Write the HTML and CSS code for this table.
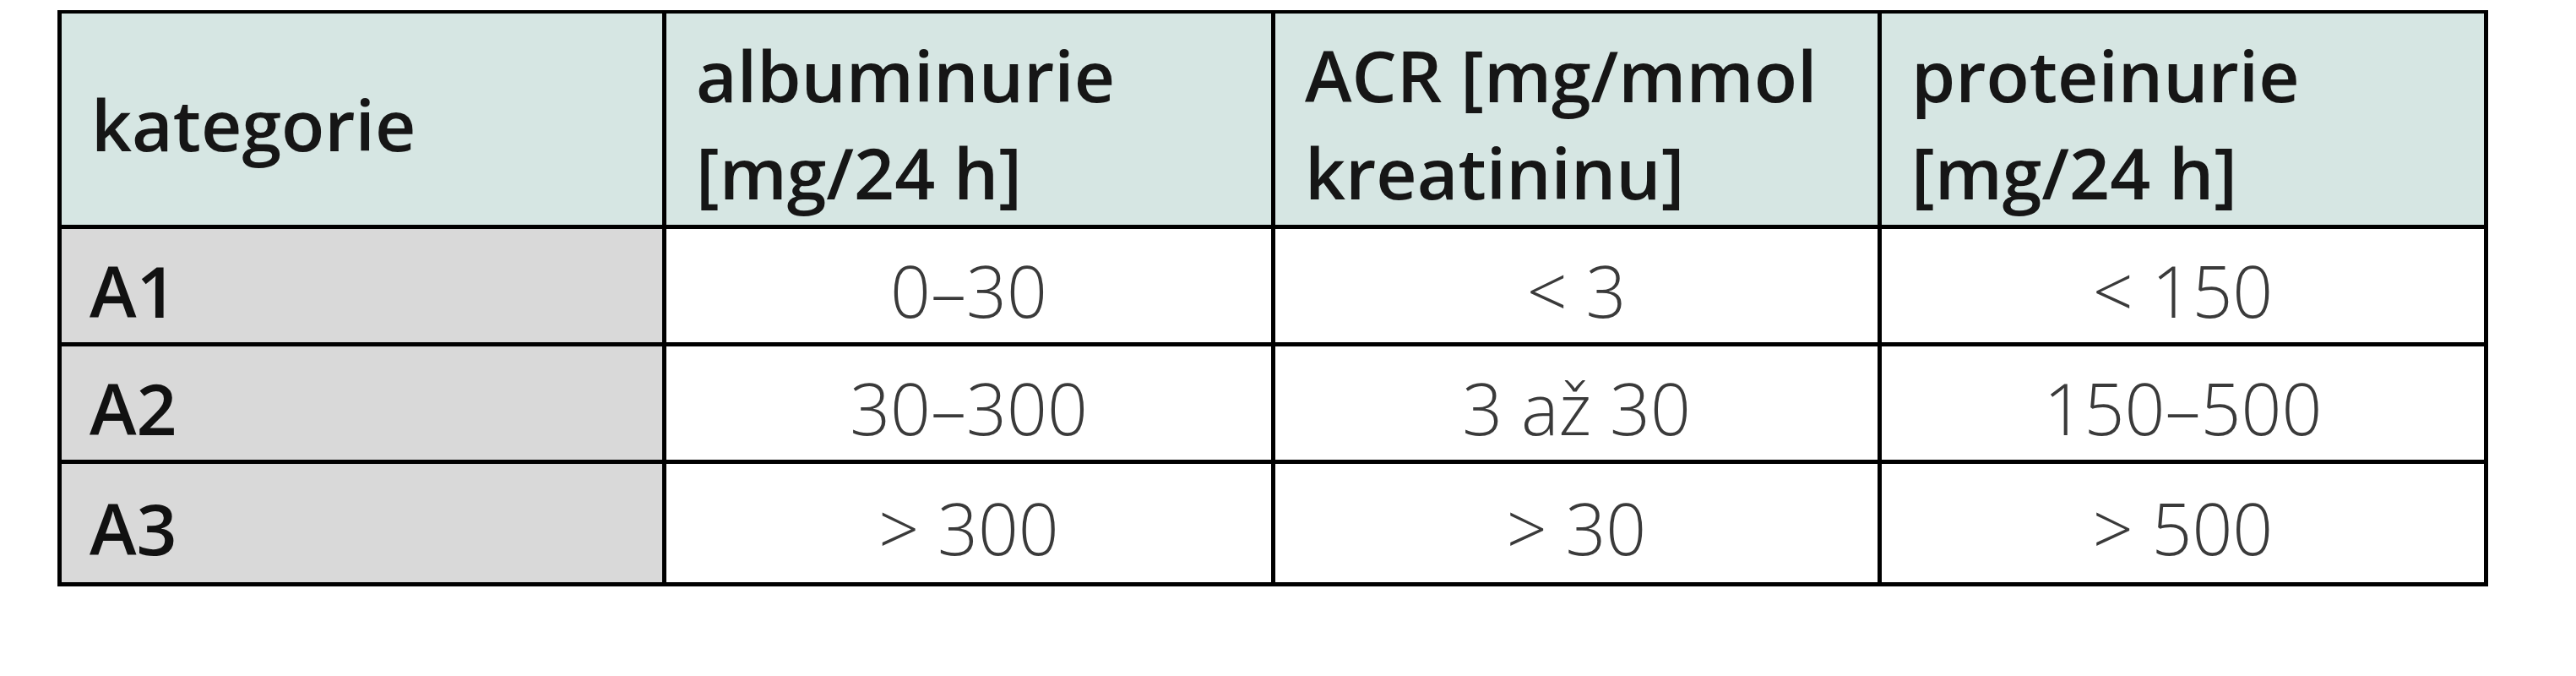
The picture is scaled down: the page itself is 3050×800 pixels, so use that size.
FILE: index.html
```html
<!DOCTYPE html>
<html lang="cs">
<head>
<meta charset="utf-8">
<title>Kategorie albuminurie</title>
<link rel="stylesheet" href="styles.css">
</head>
<body>
<table class="grid">
  <colgroup>
    <col class="c1"><col class="c2"><col class="c3"><col class="c4">
  </colgroup>
  <thead>
    <tr class="head">
      <th>kategorie</th>
      <th>albuminurie<br>[mg/24 h]</th>
      <th>ACR [mg/mmol<br>kreatininu]</th>
      <th>proteinurie<br>[mg/24 h]</th>
    </tr>
  </thead>
  <tbody>
    <tr class="row">
      <th class="cat">A1</th>
      <td>0–30</td>
      <td>&lt; 3</td>
      <td>&lt; 150</td>
    </tr>
    <tr class="row">
      <th class="cat">A2</th>
      <td>30–300</td>
      <td>3 až 30</td>
      <td>150–500</td>
    </tr>
    <tr class="row last">
      <th class="cat">A3</th>
      <td>&gt; 300</td>
      <td>&gt; 30</td>
      <td>&gt; 500</td>
    </tr>
  </tbody>
</table>
</body>
</html>
```
FILE: styles.css
```css
html, body {
  margin: 0;
  background: #ffffff;
}
body {
  padding: 12px 0 0 68px;
  font-family: "Open Sans", "Noto Sans", "Liberation Sans", sans-serif;
}
.grid {
  border-collapse: collapse;
  table-layout: fixed;
  width: 2878px;
}
.c1 { width: 716px; }
.c2 { width: 721px; }
.c3 { width: 718px; }
.c4 { width: 718px; }

.grid th,
.grid td {
  border: 5px solid #000;
  font-size: 84px;
  line-height: 115px;
  padding: 0;
  vertical-align: middle;
}
.grid .head th {
  height: 240px;
  background: #d6e6e3;
  color: #161616;
  font-weight: 600;
  text-align: left;
  padding: 10px 20px 0 35px;
  border-top-width: 4px;
}
.grid .row th,
.grid .row td {
  height: 124px;
  padding-top: 10px;
}
.grid .row.last th,
.grid .row.last td {
  height: 130px;
}
.grid .row .cat {
  background: #d9d9d9;
  color: #111;
  font-weight: 600;
  text-align: left;
  padding-left: 33px;
}
.grid .row td {
  background: #ffffff;
  color: #3a3a3a;
  font-weight: 300;
  text-align: center;
}
```
